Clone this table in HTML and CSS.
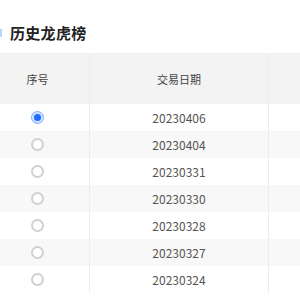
FILE: index.html
```html
<!DOCTYPE html>
<html lang="zh">
<head>
<meta charset="utf-8">
<link rel="stylesheet" href="styles.css">
</head>
<body>
<div class="page">
  <div class="title-bar">
    <span class="title-mark"></span>
    <h2 class="title">历史龙虎榜</h2>
  </div>
  <div class="table">
    <div class="row head">
      <div class="cell c1">序号</div>
      <div class="cell c2">交易日期</div>
      <div class="cell c3"></div>
    </div>
    <div class="row">
      <div class="cell c1"><span class="radio checked"></span></div>
      <div class="cell c2">20230406</div>
      <div class="cell c3"></div>
    </div>
    <div class="row alt">
      <div class="cell c1"><span class="radio"></span></div>
      <div class="cell c2">20230404</div>
      <div class="cell c3"></div>
    </div>
    <div class="row">
      <div class="cell c1"><span class="radio"></span></div>
      <div class="cell c2">20230331</div>
      <div class="cell c3"></div>
    </div>
    <div class="row alt">
      <div class="cell c1"><span class="radio"></span></div>
      <div class="cell c2">20230330</div>
      <div class="cell c3"></div>
    </div>
    <div class="row">
      <div class="cell c1"><span class="radio"></span></div>
      <div class="cell c2">20230328</div>
      <div class="cell c3"></div>
    </div>
    <div class="row alt">
      <div class="cell c1"><span class="radio"></span></div>
      <div class="cell c2">20230327</div>
      <div class="cell c3"></div>
    </div>
    <div class="row">
      <div class="cell c1"><span class="radio"></span></div>
      <div class="cell c2">20230324</div>
      <div class="cell c3"></div>
    </div>
  </div>
</div>
</body>
</html>
```
FILE: styles.css
```css
html, body {
  margin: 0;
  padding: 0;
  background: #ffffff;
  font-family: "Noto Sans CJK SC", "Noto Sans", sans-serif;
  color: #333333;
}
.page {
  width: 300px;
  overflow: hidden;
}
.title-bar {
  height: 53px;
  display: flex;
  align-items: center;
  padding-top: 12px;
  box-sizing: border-box;
}
.title-mark {
  width: 2px;
  height: 8px;
  background: #b9d5f5;
  margin-right: 8px;
}
.title {
  margin: 0;
  font-size: 15px;
  font-weight: 700;
  line-height: 18px;
  color: #222222;
  letter-spacing: 0.3px;
}
.table {
  display: flex;
  flex-direction: column;
}
.row {
  display: grid;
  grid-template-columns: 90px 179px 120px;
  height: 27px;
  background: #ffffff;
}
.row.alt {
  background: #f8f8f8;
}
.row.head {
  height: 51px;
  background: #f3f3f3;
}
.cell {
  display: flex;
  align-items: center;
  justify-content: center;
  font-size: 12px;
  color: #555555;
  border-right: 1px solid #ededed;
}
.head .cell {
  color: #444444;
  font-size: 11px;
}
.c1 {
  padding-right: 14px;
}
.radio {
  width: 13px;
  height: 13px;
  box-sizing: border-box;
  border-radius: 50%;
  border: 2px solid #d0d0d0;
  background: #ffffff;
  display: flex;
  align-items: center;
  justify-content: center;
}
.radio.checked {
  border: 1.5px solid #7fb0ff;
  background: #cfe1ff;
}
.radio.checked::after {
  content: "";
  width: 7px;
  height: 7px;
  border-radius: 50%;
  background: #1a6fff;
}
```
